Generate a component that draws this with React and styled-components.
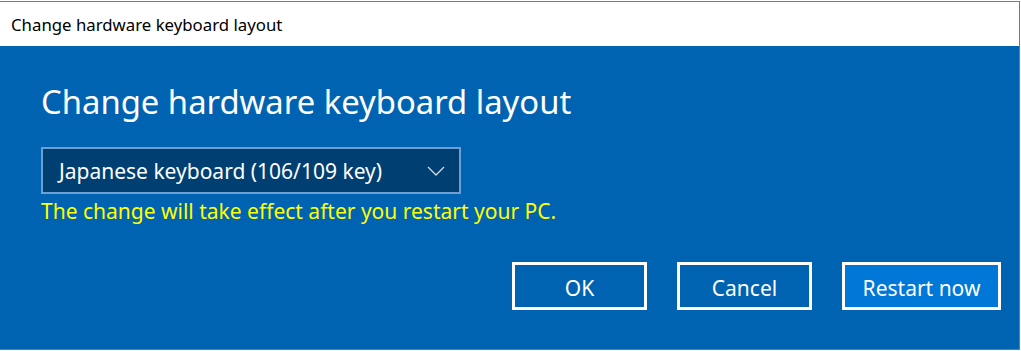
import React from "react";
import styled, { createGlobalStyle } from "styled-components";

const Global = createGlobalStyle`
  html, body { margin: 0; padding: 0; background: #ffffff; }
  body { font-family: "Noto Sans", "Open Sans", sans-serif; }
`;

const Window = styled.div`
  margin-top: 1px;
  width: 1020px;
  height: 349px;
  box-sizing: border-box;
  border-top: 1px solid #7a7a7a;
  border-right: 1px solid #7a7a7a;
  border-bottom: 1px solid #7a7a7a;
  display: flex;
  flex-direction: column;
`;

const TitleBar = styled.div`
  height: 44px;
  flex: none;
  background: #ffffff;
  display: flex;
  align-items: center;
  padding-left: 11px;
  font-size: 16.8px;
  color: #000000;
`;

const Body = styled.div`
  flex: 1;
  background: #0063b1;
  padding: 0 18px 0 41px;
  display: flex;
  flex-direction: column;
`;

const Heading = styled.h1`
  margin: 33px 0 0 0;
  font-weight: 400;
  font-size: 32.8px;
  line-height: 46px;
  color: #ffffff;
`;

const Select = styled.div`
  margin-top: 22px;
  width: 420px;
  height: 47px;
  box-sizing: border-box;
  border: 2px solid #6d9fd2;
  background: #003f72;
  display: flex;
  align-items: center;
  justify-content: space-between;
  padding: 0 14px 0 16px;
  color: #ffffff;
  font-size: 21px;
`;

const Chevron = styled.svg`
  width: 18px;
  height: 10px;
  flex: none;
`;

const Note = styled.div`
  margin-top: 3px;
  color: #ffff00;
  font-size: 21px;
  line-height: 28px;
`;

const Actions = styled.div`
  margin-top: 37px;
  display: flex;
  justify-content: flex-end;
  gap: 30px;
`;

const Button = styled.button`
  width: ${(p) => p.$w}px;
  height: 48px;
  box-sizing: border-box;
  border: 3px solid #ffffff;
  background: ${(p) => (p.$primary ? "#0078d7" : "transparent")};
  color: #ffffff;
  font-family: inherit;
  font-size: 21px;
  padding: 3px 0 0 0;
  cursor: pointer;
`;

export default function App() {
  return (
    <>
      <Global />
      <Window>
        <TitleBar>Change hardware keyboard layout</TitleBar>
        <Body>
          <Heading>Change hardware keyboard layout</Heading>
          <Select>
            <span>Japanese keyboard (106/109 key)</span>
            <Chevron viewBox="0 0 18 10">
              <polyline points="1,1 9,9 17,1" fill="none" stroke="#d0dce8" strokeWidth="1.3" />
            </Chevron>
          </Select>
          <Note>The change will take effect after you restart your PC.</Note>
          <Actions>
            <Button $w={135}>OK</Button>
            <Button $w={135}>Cancel</Button>
            <Button $w={159} $primary>Restart now</Button>
          </Actions>
        </Body>
      </Window>
    </>
  );
}
